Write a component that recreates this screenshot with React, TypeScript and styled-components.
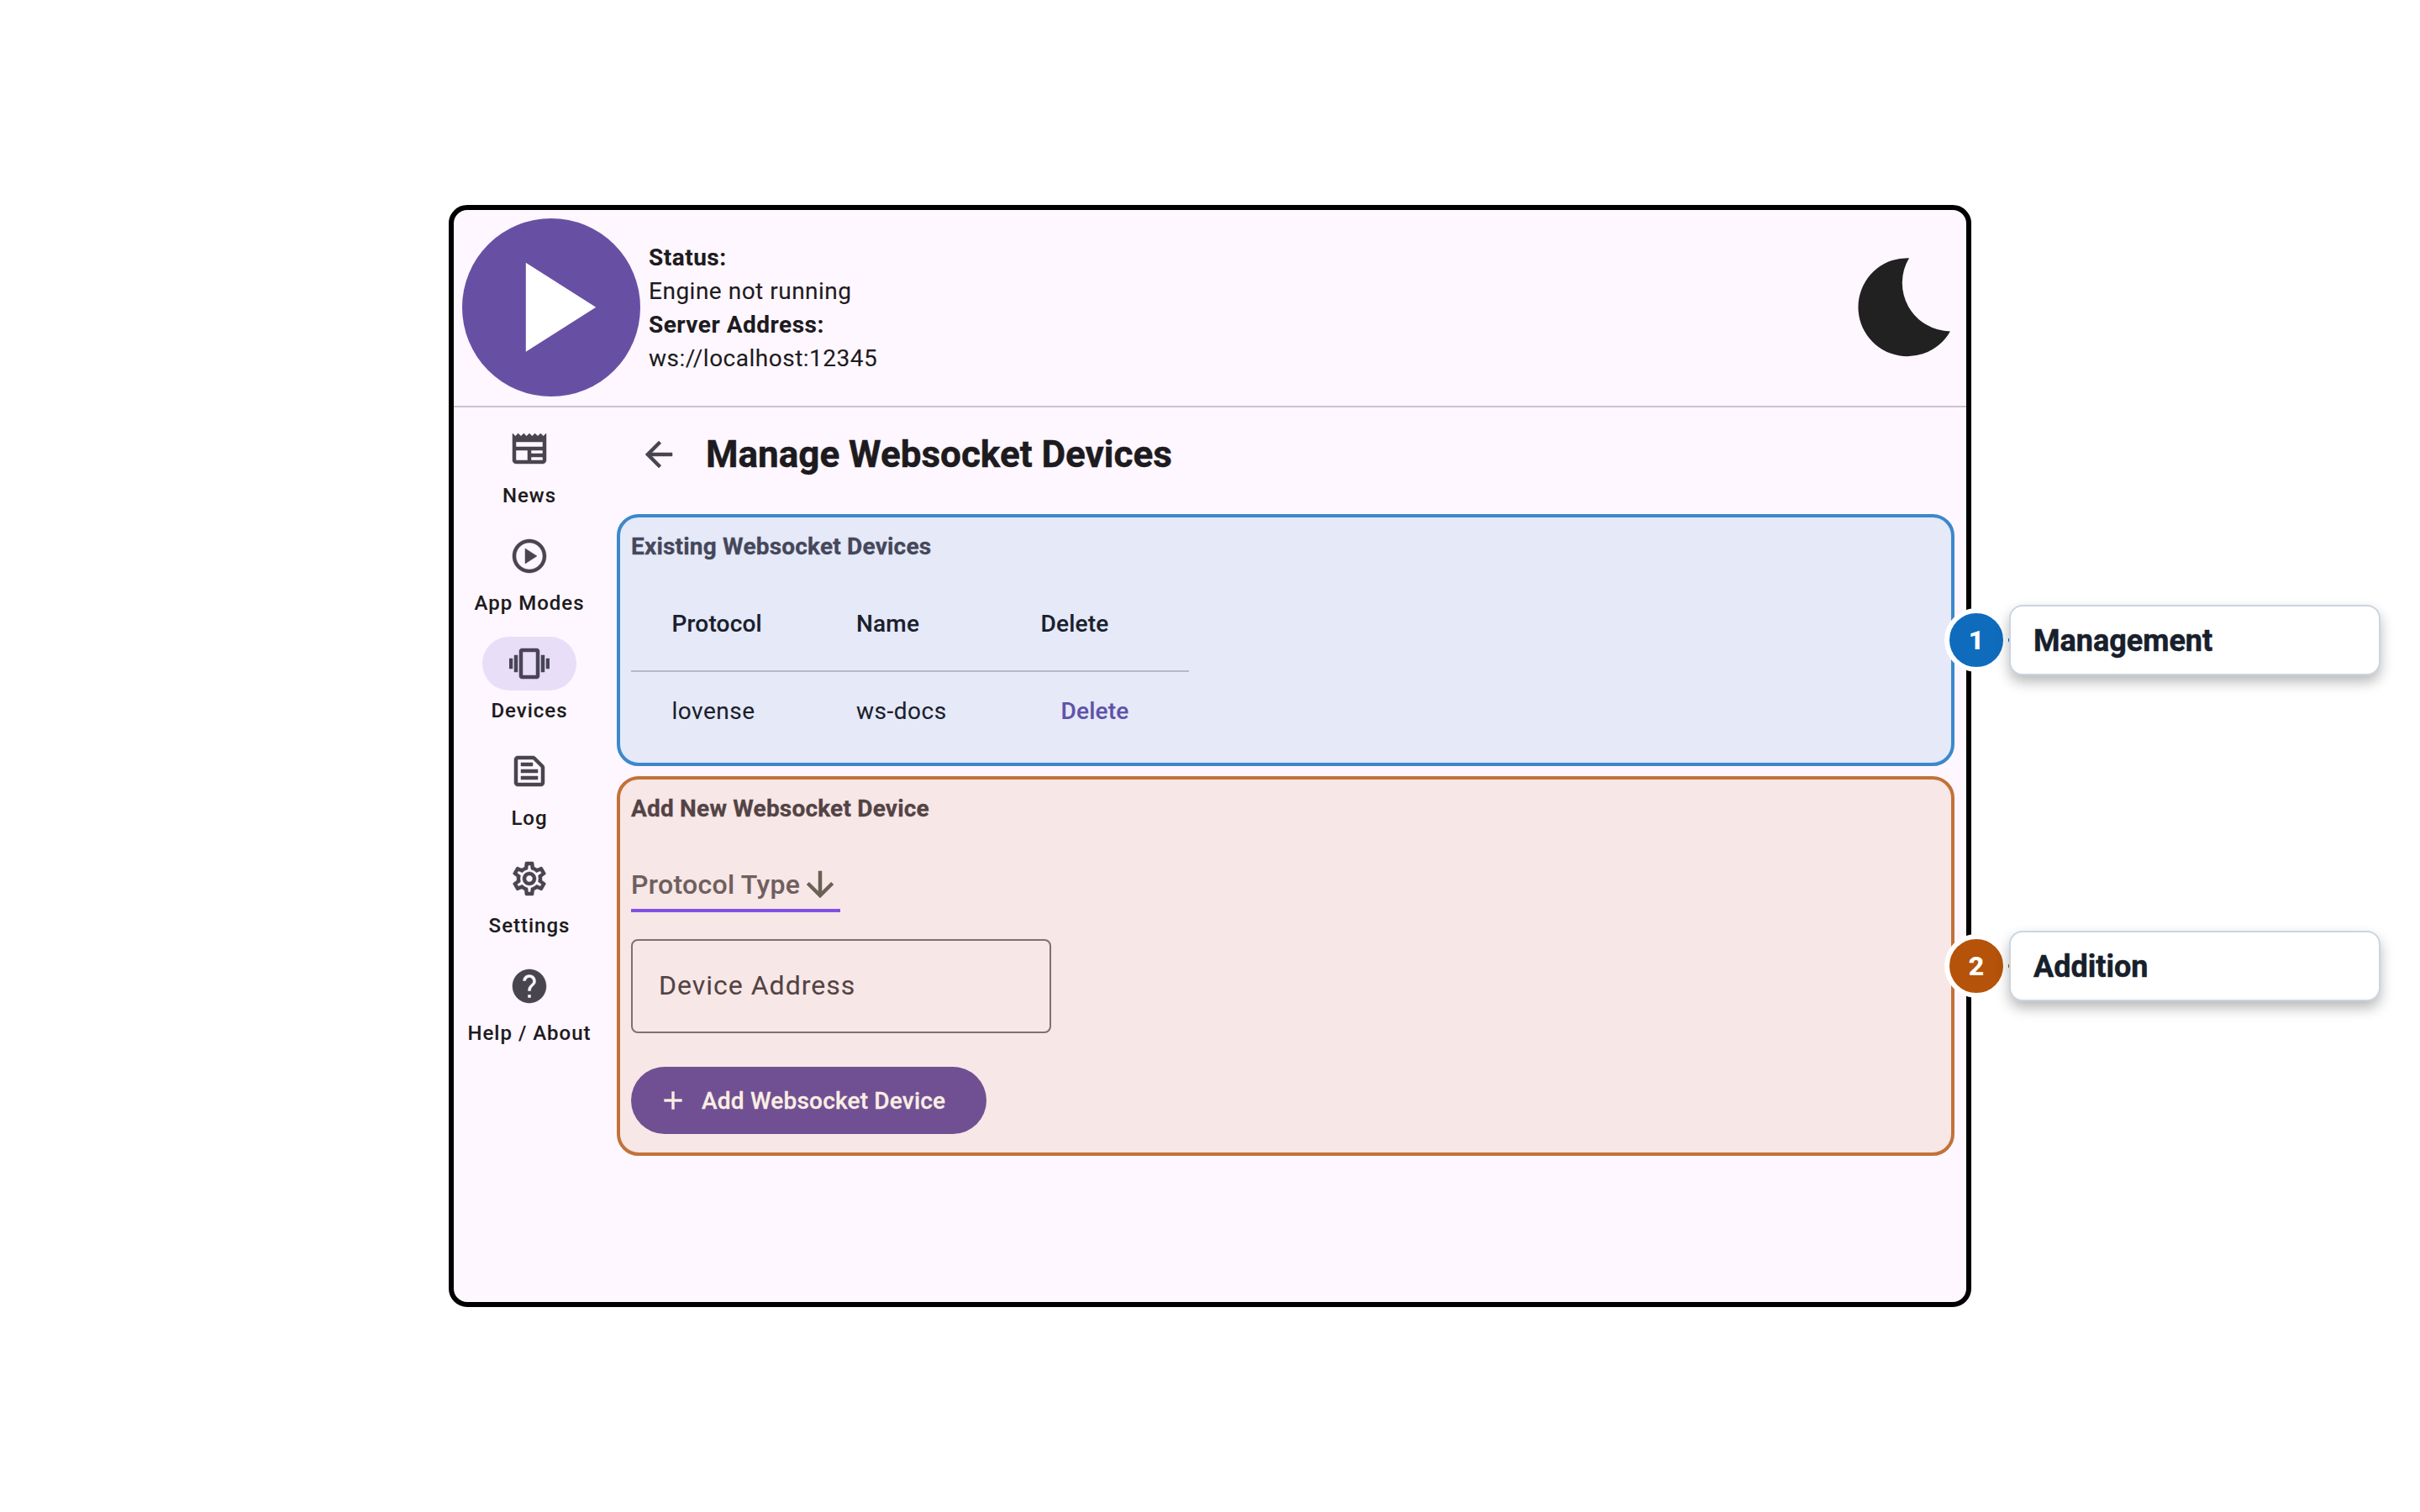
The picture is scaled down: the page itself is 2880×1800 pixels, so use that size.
import React from "react";
import styled, { createGlobalStyle, css } from "styled-components";
import {
  MdAdd,
  MdArrowBack,
  MdArrowDownward,
  MdHelp,
  MdNewspaper,
  MdOutlinePlayCircle,
  MdOutlineSettings,
  MdOutlineTextSnippet,
  MdVibration,
} from "react-icons/md";

const GlobalStyle = createGlobalStyle`
  *, *::before, *::after { box-sizing: border-box; }
  body {
    margin: 0;
    background: #ffffff;
    font-family: Roboto, "Liberation Sans", sans-serif;
    color: #1d1b20;
  }
  button { font-family: inherit; border: 0; padding: 0; background: none; }
`;

const heavierIcon = css`
  stroke-width: 0.25;

  path[fill="none"] {
    stroke: none;
  }
`;

const Page = styled.div`
  display: flex;
  align-items: center;
  justify-content: center;
  width: 2880px;
  height: 1800px;
  overflow: hidden;
  -webkit-text-stroke: 0.1px currentColor;
`;

const Window = styled.div`
  position: relative;
  display: flex;
  flex-direction: column;
  width: 1812px;
  height: 1312px;
  border: 6px solid #000000;
  border-radius: 22px;
  background: #fef7ff;
`;

const Header = styled.header`
  display: flex;
  align-items: center;
  height: 235px;
  padding: 0 19px 1px 10px;
  border-bottom: 2px solid #cac4d0;
`;

const PlayButton = styled.button`
  display: flex;
  width: 212px;
  height: 212px;
  border-radius: 50%;
  background: #6750a4;
`;

const Status = styled.dl`
  flex: 1;
  margin: 1px 0 0 10px;
  font-size: 28px;
  line-height: 40px;
  letter-spacing: 0.5px;
`;

const StatusLabel = styled.dt`
  font-weight: 700;
`;

const StatusValue = styled.dd`
  margin: 0;
`;

const Body = styled.div`
  display: flex;
  flex: 1;
`;

const Rail = styled.nav`
  display: flex;
  flex-direction: column;
  align-items: center;
  gap: 24px;
  width: 180px;
  padding-top: 17px;
`;

const RailItem = styled.div`
  display: flex;
  flex-direction: column;
  align-items: center;
  gap: 8px;
`;

const Indicator = styled.div<{ $active?: boolean }>`
  display: flex;
  align-items: center;
  justify-content: center;
  width: 112px;
  height: 64px;
  border-radius: 32px;
  font-size: 48px;
  color: #49454f;
  ${(p) => p.$active && css`background: #e8def8; color: #4a4458;`}

  svg {
    ${heavierIcon}
  }
`;

const RailLabel = styled.span`
  font-size: 24px;
  font-weight: 500;
  line-height: 32px;
  letter-spacing: 1px;
  white-space: nowrap;
`;

const Main = styled.main`
  display: flex;
  flex: 1;
  flex-direction: column;
  gap: 12px;
  padding: 0 14px;
`;

const TitleBar = styled.div`
  display: flex;
  align-items: center;
  gap: 32px;
  height: 115px;
  padding: 0 0 3px 26px;
`;

const BackIcon = styled(MdArrowBack)`
  font-size: 48px;
  color: #49454f;
  ${heavierIcon}
`;

const Title = styled.h1`
  margin: 0;
  font-size: 44px;
  font-weight: 700;
  line-height: 56px;
  -webkit-text-stroke-width: 0.5px;
`;

const Panel = styled.section<{ $tone: "blue" | "orange" }>`
  display: flex;
  flex-direction: column;
  align-items: flex-start;
  padding: 0 13px;
  border: 4px solid;
  border-radius: 26px;
  ${(p) =>
    p.$tone === "blue"
      ? css`height: 300px; border-color: #3c88cc; background: #e5e9f8; color: #45475a;`
      : css`height: 452px; border-color: #c27239; background: #f7e7e6; color: #534345;`}
`;

const PanelTitle = styled.h2`
  margin: 15px 0 0;
  font-size: 28px;
  font-weight: 700;
  line-height: 40px;
  letter-spacing: 0.2px;
  -webkit-text-stroke-width: 0.3px;
`;

const Table = styled.div`
  width: 664px;
  margin-top: 15px;
  color: #1a202c;
`;

const TableRow = styled.div<{ $head?: boolean }>`
  display: grid;
  grid-template-columns: 219.5px 219.5px 1fr;
  align-items: center;
  height: ${(p) => (p.$head ? 114 : 94)}px;
  padding: ${(p) => (p.$head ? 2 : 0)}px 0 0 48.5px;
  font-size: 28px;
  line-height: 40px;
  font-weight: ${(p) => (p.$head ? 500 : 400)};
  letter-spacing: ${(p) => (p.$head ? 0.2 : 0.5)}px;
  border-bottom: ${(p) => (p.$head ? "2px solid #b6b8cb" : "0")};
`;

const DeleteButton = styled.button`
  padding-left: 24px;
  text-align: left;
  font-size: 28px;
  font-weight: 500;
  line-height: 40px;
  letter-spacing: 0.2px;
  color: #5f52a9;
`;

const Dropdown = styled.div`
  display: flex;
  align-items: center;
  width: 249px;
  height: 62px;
  margin-top: 41px;
  border-bottom: 4px solid #824fe6;
  font-size: 32px;
  font-weight: 500;
  line-height: 48px;
  letter-spacing: 0.3px;
  color: #6f5f5e;
  white-space: nowrap;
`;

const DropIcon = styled(MdArrowDownward)`
  flex: none;
  font-size: 48px;
  color: #6a6254;
  ${heavierIcon}
`;

const Field = styled.div`
  display: flex;
  align-items: center;
  width: 500px;
  height: 112px;
  margin-top: 32px;
  padding: 0 30px 2px 31px;
  border: 2px solid #816f72;
  border-radius: 8px;
  font-size: 32px;
  line-height: 48px;
  letter-spacing: 1px;
`;

const AddButton = styled.button`
  display: flex;
  align-items: center;
  gap: 16px;
  width: 423px;
  height: 80px;
  margin-top: 40px;
  padding-left: 32px;
  border-radius: 40px;
  background: #705093;
  color: #faeee3;
  font-size: 28px;
  font-weight: 500;
  letter-spacing: 0.2px;
  white-space: nowrap;
  -webkit-text-stroke-width: 0.3px;
`;

const PlusIcon = styled(MdAdd)`
  flex: none;
  font-size: 36px;
  ${heavierIcon}
`;

const Callout = styled.div<{ $top: number }>`
  position: absolute;
  top: ${(p) => p.$top}px;
  left: 1774px;
  display: flex;
  align-items: center;
`;

const Badge = styled.span<{ $color: string }>`
  display: flex;
  align-items: center;
  justify-content: center;
  width: 76px;
  height: 76px;
  border: 6px solid #ffffff;
  border-radius: 50%;
  background: ${(p) => p.$color};
  color: #ffffff;
  font-size: 32px;
  font-weight: 800;
  line-height: 1;
`;

const Connector = styled.span<{ $color: string }>`
  width: 1px;
  height: 4px;
  background: ${(p) => p.$color};
`;

const CalloutCard = styled.div`
  display: flex;
  align-items: center;
  width: 442px;
  height: 84px;
  padding: 2px 27px 0;
  border: 2px solid #cbd5e1;
  border-radius: 16px;
  background: #ffffff;
  box-shadow: 0 8px 16px rgba(0, 0, 0, 0.28);
  color: #17202b;
  font-size: 36px;
  font-weight: 700;
  -webkit-text-stroke-width: 0.5px;
`;

const navItems = [
  { label: "News", icon: <MdNewspaper /> },
  { label: "App Modes", icon: <MdOutlinePlayCircle /> },
  { label: "Devices", icon: <MdVibration />, active: true },
  { label: "Log", icon: <MdOutlineTextSnippet /> },
  { label: "Settings", icon: <MdOutlineSettings /> },
  { label: "Help / About", icon: <MdHelp /> },
];

const callouts = [
  { number: 1, label: "Management", color: "#0f6cbd", top: 470 },
  { number: 2, label: "Addition", color: "#b45309", top: 858 },
];

const PlayGlyph = () => (
  <svg width="212" height="212" viewBox="0 0 212 212" fill="#ffffff">
    <path d="M75.8 52.8v106l83.4-53z" />
  </svg>
);

const MoonGlyph = () => (
  <svg width="110" height="118" viewBox="0 0 110 118" fill="#212121">
    <path d="M61 0.2A58.5 58.5 0 1 0 109.9 87.4A57.6 57.6 0 0 1 61 0.2z" />
  </svg>
);

export default function App() {
  return (
    <Page>
      <GlobalStyle />
      <Window>
        <Header>
          <PlayButton aria-label="Start">
            <PlayGlyph />
          </PlayButton>
          <Status>
            <StatusLabel>Status:</StatusLabel>
            <StatusValue>Engine not running</StatusValue>
            <StatusLabel>Server Address:</StatusLabel>
            <StatusValue>ws://localhost:12345</StatusValue>
          </Status>
          <MoonGlyph />
        </Header>
        <Body>
          <Rail>
            {navItems.map((item) => (
              <RailItem key={item.label}>
                <Indicator $active={item.active}>{item.icon}</Indicator>
                <RailLabel>{item.label}</RailLabel>
              </RailItem>
            ))}
          </Rail>
          <Main>
            <TitleBar>
              <BackIcon />
              <Title>Manage Websocket Devices</Title>
            </TitleBar>
            <Panel $tone="blue">
              <PanelTitle>Existing Websocket Devices</PanelTitle>
              <Table>
                <TableRow $head>
                  <span>Protocol</span>
                  <span>Name</span>
                  <span>Delete</span>
                </TableRow>
                <TableRow>
                  <span>lovense</span>
                  <span>ws-docs</span>
                  <DeleteButton>Delete</DeleteButton>
                </TableRow>
              </Table>
            </Panel>
            <Panel $tone="orange">
              <PanelTitle>Add New Websocket Device</PanelTitle>
              <Dropdown>
                Protocol Type
                <DropIcon />
              </Dropdown>
              <Field>Device Address</Field>
              <AddButton>
                <PlusIcon />
                Add Websocket Device
              </AddButton>
            </Panel>
          </Main>
        </Body>
        {callouts.map((c) => (
          <Callout key={c.number} $top={c.top}>
            <Badge $color={c.color}>{c.number}</Badge>
            <Connector $color={c.color} />
            <CalloutCard>{c.label}</CalloutCard>
          </Callout>
        ))}
      </Window>
    </Page>
  );
}
